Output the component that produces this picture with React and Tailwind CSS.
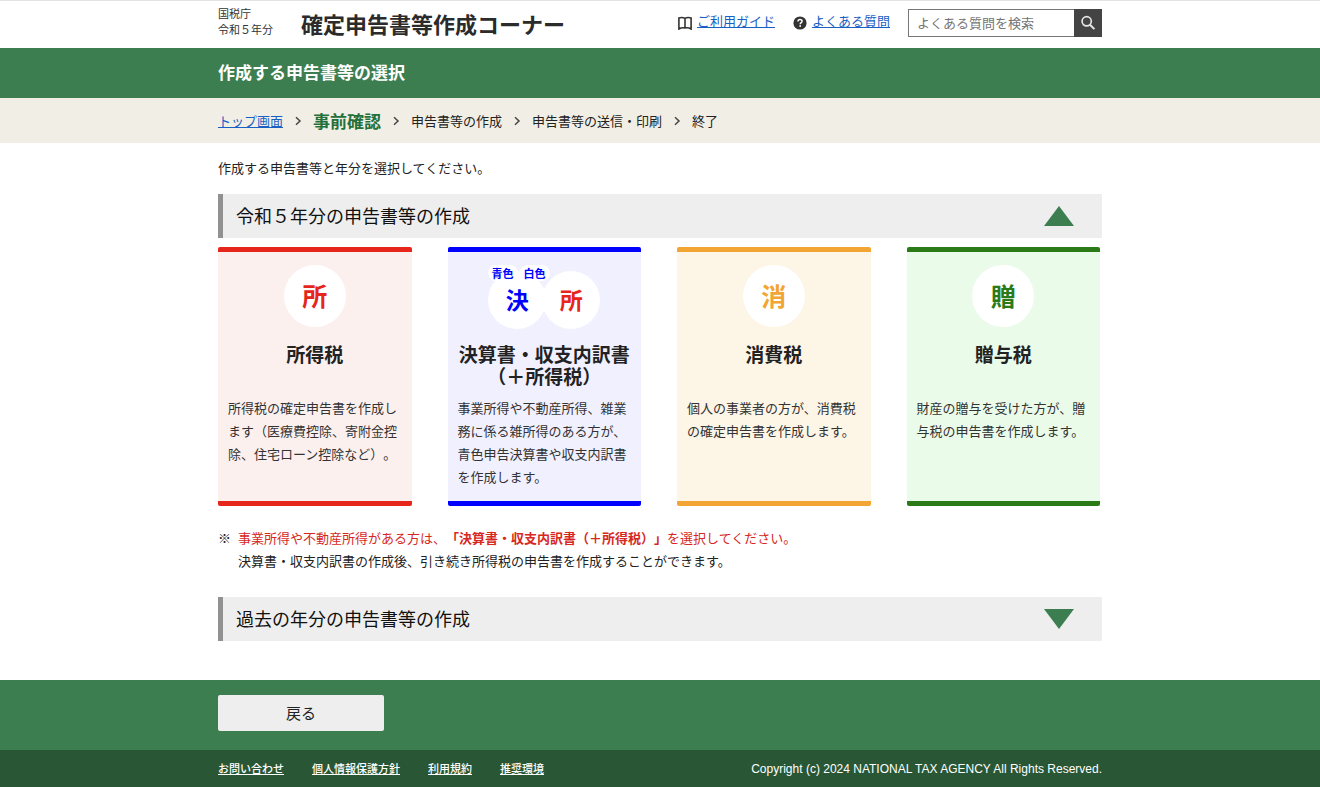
import React, { useState } from "react";

function BookIcon() {
  return (
    <svg viewBox="0 0 14 14" className="h-3.5 w-3.5 shrink-0" fill="none" stroke="#333333" strokeWidth="1.600" aria-hidden="true">
      <path d="M7 12V2.400C5.600 1.500 2.600 1.400 0.900 1.900V13C3 11.600 5.500 11.600 7 12C8.500 11.600 11 11.600 13.100 13V1.900C11.400 1.400 8.400 1.500 7 2.400" />
    </svg>
  );
}

function HelpIcon() {
  return (
    <svg viewBox="0 0 14 14" className="h-3.5 w-3.5 shrink-0" aria-hidden="true">
      <circle cx="7" cy="7" r="6.6" fill="#333333" />
      <path d="M5 5.500C5 4.200 5.900 3.500 7.050 3.500c1.200 0 2.050.7 2.050 1.750C9.100 6.700 7.200 6.700 7.200 8.300" fill="none" stroke="#fff" strokeWidth="1.500" />
      <rect x="6.400" y="9.200" width="1.600" height="1.600" fill="#fff" />
    </svg>
  );
}

function SearchIcon() {
  return (
    <svg viewBox="0 0 16 16" className="h-4 w-4" fill="none" stroke="#e6e6e6" aria-hidden="true">
      <circle cx="6.700" cy="6.300" r="4.600" strokeWidth="1.700" />
      <path d="M10 9.700L14.400 14.100" strokeWidth="2" />
    </svg>
  );
}

function Chevron() {
  return (
    <svg viewBox="0 0 8 10" className="h-2.5 w-2 shrink-0" fill="none" stroke="#444444" strokeWidth="1.500" aria-hidden="true">
      <path d="M2 1.200L6 5L2 8.800" />
    </svg>
  );
}

function Section({ title, open, onToggle }) {
  return (
    <h2>
      <button
        type="button"
        aria-expanded={open}
        onClick={onToggle}
        className="flex h-11 w-full items-center justify-between border-l-[5px] border-[#919191] bg-[#eeeeee] pr-7 pl-[13px] text-left text-[18px] text-[#111111]"
      >
        <span className="pb-0.5">{title}</span>
        <svg viewBox="0 0 30 20" className="h-5 w-[30px]" fill="#3c7e4f" aria-hidden="true">
          <path d={open ? "M15 0L30 20H0Z" : "M0 0H30L15 20Z"} />
        </svg>
      </button>
    </h2>
  );
}

const cards = [
  {
    frame: "border-[#e6251b] bg-[#fcf0ee]",
    mark: "所",
    markColor: "text-[#e6251b]",
    title: "所得税",
    text: "所得税の確定申告書を作成します（医療費控除、寄附金控除、住宅ローン控除など）。",
  },
  {
    frame: "border-[#0000ff] bg-[#f0f0ff]",
    title: "決算書・収支内訳書（＋所得税）",
    text: "事業所得や不動産所得、雑業務に係る雑所得のある方が、青色申告決算書や収支内訳書を作成します。",
  },
  {
    frame: "border-[#f2a533] bg-[#fdf5e6]",
    mark: "消",
    markColor: "text-[#f2a533]",
    title: "消費税",
    text: "個人の事業者の方が、消費税の確定申告書を作成します。",
  },
  {
    frame: "border-[#2a7b17] bg-[#ebfbea]",
    mark: "贈",
    markColor: "text-[#2a7b17]",
    title: "贈与税",
    text: "財産の贈与を受けた方が、贈与税の申告書を作成します。",
  },
];

function PairedMark() {
  return (
    <span className="relative flex h-16 items-end justify-center text-[23px] font-bold">
      <span className="flex h-[58px] w-[58px] items-center justify-center rounded-full bg-white pb-0.5 text-[#0000ff]">決</span>
      <span className="-ml-1 flex h-[58px] w-[58px] items-center justify-center rounded-full bg-white pb-0.5 text-[#e6251b]">所</span>
      <span className="absolute top-0 left-[30px] flex gap-0.5 text-[11px] leading-4 text-[#0000ff]">
        <span className="rounded-full bg-white px-1">青色</span>
        <span className="rounded-full bg-white px-1">白色</span>
      </span>
    </span>
  );
}

function Card({ frame, mark, markColor, title, text }) {
  return (
    <a href="#" className={"flex flex-col rounded-xs border-y-[5px] px-2.5 pt-[13px] pb-[13px] " + frame}>
      {mark ? (
        <span className="flex h-16 items-start justify-center">
          <span className={"flex h-[62px] w-[62px] items-center justify-center rounded-full bg-white pb-0.5 text-[25px] font-bold " + markColor}>
            {mark}
          </span>
        </span>
      ) : (
        <PairedMark />
      )}
      <span className="mt-3.5 block min-h-11 text-center text-[19px] leading-[22px] font-bold text-[#222222]">{title}</span>
      <span className="mt-[9px] block text-[13px] leading-[23px] text-[#333333]">{text}</span>
    </a>
  );
}

export default function App() {
  const [current, setCurrent] = useState(true);
  const [past, setPast] = useState(false);

  return (
    <div className="flex min-h-screen flex-col bg-white font-['Noto_Sans_CJK_JP',sans-serif] text-[13px] text-[#222222] [text-spacing-trim:space-all]">
      <header className="border-t border-[#e3e3e3]">
        <div className="mx-auto flex h-[47px] w-full max-w-[884px] items-center pb-1">
          <p className="pb-1 text-[11px] leading-4 text-[#333333]">
            国税庁
            <br />
            令和５年分
          </p>
          <h1 className="ml-7 text-[22px] leading-8 font-bold text-[#2b2b2b]">確定申告書等作成コーナー</h1>
          <nav className="ml-auto flex items-center gap-[18px]">
            <span className="flex items-center gap-[5px]">
              <BookIcon />
              <a href="#" className="pb-1 text-[#1a5fc4] underline">ご利用ガイド</a>
            </span>
            <span className="flex items-center gap-[5px]">
              <HelpIcon />
              <a href="#" className="pb-1 text-[#1a5fc4] underline">よくある質問</a>
            </span>
          </nav>
          <form className="ml-[18px] flex h-7 w-[194px]" onSubmit={(e) => e.preventDefault()}>
            <input
              type="text"
              aria-label="よくある質問を検索"
              placeholder="よくある質問を検索"
              className="min-w-0 flex-1 border border-r-0 border-[#777777] px-2 text-[13px] outline-none placeholder:text-[#757575]"
            />
            <button type="submit" aria-label="検索" className="flex w-7 items-center justify-center bg-[#444444]">
              <SearchIcon />
            </button>
          </form>
        </div>
      </header>

      <div className="bg-[#3c7e4f]">
        <p className="mx-auto flex h-[50px] w-full max-w-[884px] items-center pb-0.5 text-[17px] font-bold text-white">作成する申告書等の選択</p>
      </div>

      <nav className="bg-[#f1eee5]">
        <ol className="mx-auto flex h-[45px] w-full max-w-[884px] items-center gap-[11px]">
          <li><a href="#" className="text-[#1a5fc4] underline">トップ画面</a></li>
          <Chevron />
          <li className="text-[17px] font-bold text-[#23703a]">事前確認</li>
          <Chevron />
          <li>申告書等の作成</li>
          <Chevron />
          <li>申告書等の送信・印刷</li>
          <Chevron />
          <li>終了</li>
        </ol>
      </nav>

      <main className="mx-auto w-full max-w-[884px] flex-1 pt-[13px] pb-[39px] leading-[23px]">
        <p className="mb-[15px]">作成する申告書等と年分を選択してください。</p>

        <Section title="令和５年分の申告書等の作成" open={current} onToggle={() => setCurrent(!current)} />
        {current && (
          <>
            <div className="mt-[9px] grid grid-cols-4 gap-9 pr-0.5">
              {cards.map((card) => (
                <Card key={card.title} {...card} />
              ))}
            </div>
            <div className="mt-5 mb-[25px] flex gap-[7px]">
              <span>※</span>
              <p>
                <span className="text-[#d6281e]">
                  事業所得や不動産所得がある方は、<strong className="font-bold">「決算書・収支内訳書（＋所得税）」</strong>を選択してください。
                </span>
                <br />
                決算書・収支内訳書の作成後、引き続き所得税の申告書を作成することができます。
              </p>
            </div>
          </>
        )}

        <Section title="過去の年分の申告書等の作成" open={past} onToggle={() => setPast(!past)} />
      </main>

      <footer className="text-white">
        <div className="bg-[#3c7e4f]">
          <div className="mx-auto flex h-[70px] w-full max-w-[884px] items-start pt-[15px]">
            <button type="button" className="h-9 w-[166px] rounded-xs bg-[#eeeeee] text-[15px] text-[#222222]">戻る</button>
          </div>
        </div>
        <div className="bg-[#295735]">
          <div className="mx-auto flex h-[37px] w-full max-w-[884px] items-center justify-between">
            <nav className="flex gap-7 text-[11px] font-medium">
              <a href="#" className="underline">お問い合わせ</a>
              <a href="#" className="underline">個人情報保護方針</a>
              <a href="#" className="underline">利用規約</a>
              <a href="#" className="underline">推奨環境</a>
            </nav>
            <small className="font-['Liberation_Sans',sans-serif] text-[12px]">Copyright (c) 2024 NATIONAL TAX AGENCY All Rights Reserved.</small>
          </div>
        </div>
      </footer>
    </div>
  );
}
